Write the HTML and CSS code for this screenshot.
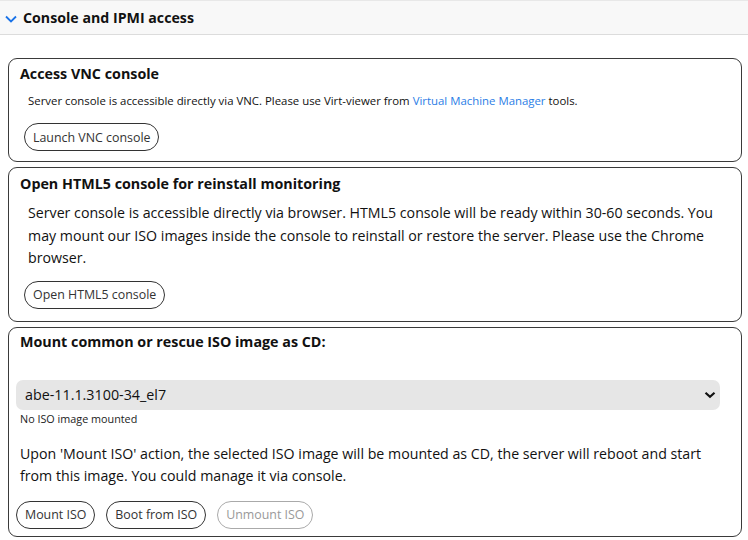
FILE: index.html
```html
<!DOCTYPE html>
<html>
<head>
<meta charset="utf-8">
<link rel="stylesheet" href="styles.css">
</head>
<body>
<div class="section-header">
  <svg class="chev" width="12" height="8" viewBox="0 0 12 8"><path d="M1 1.5 L6 6.5 L11 1.5" fill="none" stroke="#1a73e8" stroke-width="1.8"/></svg>
  <span>Console and IPMI access</span>
</div>
<div class="content">
  <div class="card card-vnc">
    <h3 class="card-title">Access VNC console</h3>
    <p class="note">Server console is accessible directly via VNC. Please use Virt-viewer from <a href="#" class="link">Virtual Machine Manager</a> tools.</p>
    <div class="actions indent"><button class="pill">Launch VNC console</button></div>
  </div>
  <div class="card card-html5">
    <h3 class="card-title">Open HTML5 console for reinstall monitoring</h3>
    <p class="body-text indent-text">Server console is accessible directly via browser. HTML5 console will be ready within 30-60 seconds. You may mount our ISO images inside the console to reinstall or restore the server. Please use the Chrome browser.</p>
    <div class="actions indent"><button class="pill">Open HTML5 console</button></div>
  </div>
  <div class="card card-iso">
    <h3 class="card-title">Mount common or rescue ISO image as CD:</h3>
    <div class="select">
      <span>abe-11.1.3100-34_el7</span>
      <svg width="12" height="8" viewBox="0 0 12 8"><path d="M1.5 1.8 L6 5.8 L10.5 1.8" fill="none" stroke="#111" stroke-width="2.2"/></svg>
    </div>
    <div class="status">No ISO image mounted</div>
    <p class="body-text iso-text">Upon 'Mount ISO' action, the selected ISO image will be mounted as CD, the server will reboot and start from this image. You could manage it via console.</p>
    <div class="actions gap">
      <button class="pill">Mount ISO</button>
      <button class="pill">Boot from ISO</button>
      <button class="pill disabled">Unmount ISO</button>
    </div>
  </div>
</div>
</body>
</html>
```
FILE: styles.css
```css
* { box-sizing: border-box; }
body {
  margin: 0;
  font-family: "Open Sans", "Noto Sans", sans-serif;
  color: #111;
  background: #fff;
}
.section-header {
  height: 35px;
  background: #f8f8f8;
  border-top: 1px solid #e8e8e8;
  border-bottom: 1px solid #dcdcdc;
  display: flex;
  align-items: center;
  padding-left: 5px;
  gap: 6px;
  font-weight: 700;
  font-size: 14.2px;
}
.chev { margin-top: 2px; }
.content {
  padding: 23px 6px 0 8px;
  display: flex;
  flex-direction: column;
  gap: 5px;
}
.card {
  border: 1px solid #3a3a3a;
  border-radius: 9px;
  padding: 0 7px;
}
.card-title {
  margin: 0;
  padding-left: 4px;
  font-size: 14.3px;
  font-weight: 700;
  line-height: 20px;
}
.card-vnc { padding-top: 5px; padding-bottom: 10px; }
.card-html5 { padding-top: 6px; padding-bottom: 12px; }
.card-iso { padding-top: 4px; padding-bottom: 7px; }
.note {
  margin: 9px 0 0 12px;
  font-size: 11.4px;
  line-height: 16px;
}
.link { color: #2a7de6; text-decoration: none; }
.body-text {
  margin: 0;
  font-size: 14.2px;
  line-height: 22.5px;
}
.indent-text { padding-left: 12px; margin-top: 8px; }
.actions { display: flex; }
.indent { padding-left: 8px; }
.card-vnc .actions { margin-top: 14px; }
.card-html5 .actions { margin-top: 11px; }
.gap { gap: 11px; margin-top: 13px; }
.pill {
  height: 28px;
  border: 1px solid #333;
  border-radius: 14px;
  background: #fff;
  color: #333;
  font-family: inherit;
  font-size: 12.4px;
  padding: 0 8px;
  flex: none;
}
.pill.disabled { border-color: #aaa; color: #999; }
.select {
  margin: 28px 14px 0 0;
  height: 30px;
  background: #e6e6e6;
  border-radius: 7px;
  display: flex;
  align-items: center;
  justify-content: space-between;
  padding: 0 4px 0 9px;
  font-size: 14.3px;
}
.status {
  padding-left: 4px;
  font-size: 10.8px;
  line-height: 15px;
  margin-top: 1px;
  color: #222;
}
.iso-text { padding-left: 4px; padding-right: 16px; margin-top: 17px; }
```
